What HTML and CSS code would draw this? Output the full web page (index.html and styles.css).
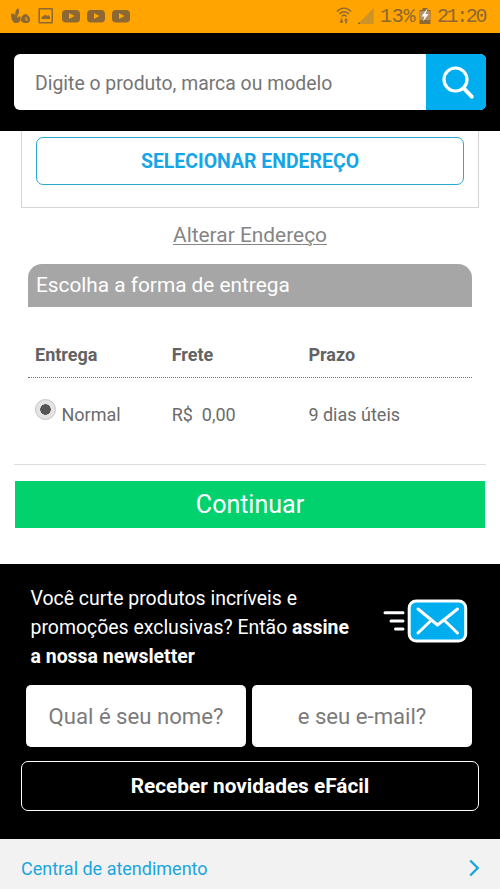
FILE: index.html
```html
<!DOCTYPE html>
<html lang="pt-BR">
<head>
<meta charset="utf-8">
<title>eFácil - Entrega</title>
<link rel="stylesheet" href="styles.css">
</head>
<body>
<div class="status">
  <svg class="status-left" width="132" height="33" viewBox="0 0 132 33" fill="#8c6834">
    <path d="M18 8c-2 2-3.500 4-2.500 7-2-1.500-3.500-2-4.500-1 0 4 1 8.500 5 9 4 0 5-3 4.500-6-1-1-2 0-3 1-.5-1.500 0-2.500 1-4 1-2 1-4-.5-6z"/>
    <path d="M21 20c0-4 3-6 5-6 2 1 4 3 4 5 .5 2-1 4-3 4-3 0-6-.5-6-3z"/>
    <path d="M26 17v3h2" fill="none" stroke="#ffa400" stroke-width="1"/>
    <rect x="39.200" y="8.700" width="13" height="14" rx=".5" fill="none" stroke="#8c6834" stroke-width="1.500"/>
    <path d="M41.500 19v-2l2-1 2-1.500 1.500 1.500 1.500-1 1.500 2v2z"/>
    <rect x="62" y="10" width="18" height="12.500" rx="4"/>
    <rect x="87" y="10" width="18" height="12.500" rx="4"/>
    <rect x="112" y="10" width="18" height="12.500" rx="4"/>
    <path d="M69 13v6l5.500-3zM94 13v6l5.500-3zM119 13v6l5.500-3z" fill="#ffa400"/>
  </svg>
  <div class="status-right">
    <svg width="42" height="33" viewBox="335 0 42 33" fill="none" stroke="#8c6834" stroke-width="1.400">
      <path d="M337 11.500c4-4.500 10-4.500 14 0M339.300 14c3-3 7-3 9.500 0M341.500 16.500c2-1.700 3.500-1.700 5 0"/>
      <path d="M341.500 18.500v4.500M346 19v4.500" stroke-width="1.600"/>
      <path d="M340 21l1.500 2 1.500-2M344.500 20.500l1.500-2 1.500 2" stroke-width="1"/>
      <path d="M373.700 8v16H358z" fill="#ce9328" stroke="none"/>
      <path d="M358 22.500h2V24h-2z" fill="#8c6834" stroke="none"/>
    </svg>
    <span class="percent">13%</span>
    <svg class="battery" width="12" height="33" viewBox="419 0 12 33">
      <path d="M422.500 8h5v2h3v14h-11V10h3z" fill="#8c6834"/>
      <path d="M420 11h10v9h-10z" fill="#b29069"/>
      <path d="M426.500 9.500l-5 7h3l-1.500 5 5.500-7.500h-3.200l2-4.500z" fill="#fff"/>
    </svg>
    <span class="clock">21:20</span>
  </div>
</div>

<header class="header">
  <div class="search">
    <span class="search-text">Digite o produto, marca ou modelo</span>
    <div class="search-button">
      <svg width="60" height="56" viewBox="0 0 60 56" fill="none" stroke="#fff">
        <circle cx="29.500" cy="25.500" r="11.500" stroke-width="3.200"/>
        <path d="M38 34.500l7.700 8.200" stroke-width="4" stroke-linecap="round"/>
      </svg>
    </div>
  </div>
</header>

<main class="main">
  <section class="address"><div class="select-address">SELECIONAR ENDEREÇO</div></section>
  <div class="change"><a>Alterar Endereço</a></div>
  <section class="delivery">
    <h2 class="delivery-title">Escolha a forma de entrega</h2>
    <div class="row head"><span>Entrega</span><span>Frete</span><span>Prazo</span></div>
    <div class="row option">
      <span class="choice"><i class="radio"></i>Normal</span><span>R$&nbsp; 0,00</span><span>9 dias úteis</span>
    </div>
  </section>
  <div class="continue">Continuar</div>
</main>

<section class="newsletter">
  <div class="pitch">
    <p>Você curte produtos incríveis e<br>promoções exclusivas? Então <b>assine</b><br><b>a nossa newsletter</b></p>
    <svg width="86" height="46" viewBox="382 598 86 46" fill="none" stroke="#fff" stroke-linecap="round" stroke-linejoin="round">
      <rect x="409.200" y="601" width="56.500" height="40" rx="7" fill="#00adee" stroke-width="3"/>
      <path d="M418 609l19.500 16L457.500 609M418 633l13-12.500M457.500 633l-13-12.500" stroke-width="3"/>
      <path d="M385 612.700h18M391 621h12M395.500 629h7.500" stroke-width="3"/>
    </svg>
  </div>
  <div class="fields">
    <div class="field">Qual é seu nome?</div>
    <div class="field">e seu e-mail?</div>
  </div>
  <div class="subscribe">Receber novidades eFácil</div>
</section>

<footer class="footer">
  <span>Central de atendimento</span>
  <svg width="12" height="18" viewBox="0 0 12 18" fill="none" stroke="#1ba5dc" stroke-width="2.400"><path d="M1.200 1.500l7.500 7.500-7.500 7.500"/></svg>
</footer>
</body>
</html>
```
FILE: styles.css
```css
* { box-sizing: border-box; }
body { margin: 0; height: 889px; overflow: hidden; background: #fff; font-family: Roboto, sans-serif; color: #6b6b6b; }
svg { display: block; flex: none; }
.status { height: 33px; background: #ffa400; display: flex; justify-content: space-between; color: #8c6834; }
.status-right { display: flex; padding-right: 13px; font: 20px/33px "Liberation Mono", monospace; }
.percent { width: 42px; padding-left: 3px; letter-spacing: -.3px; }
.clock { width: 56px; padding-left: 6px; letter-spacing: -2.400px; white-space: nowrap; }
.header { height: 98px; background: #000; padding: 21px 14px 0; }
.search { height: 56px; display: flex; background: #fff; border-radius: 6px; overflow: hidden; }
.search-text { flex: 1; padding-left: 21px; font-size: 19.400px; line-height: 59px; color: #757575; }
.search-button { width: 60px; background: #00adee; }
.main { height: 433px; }
.address { height: 77px; margin: 0 21px; padding: 6px 14px 0; border: solid #d5d5d5; border-width: 0 1px 1px; }
.select-address { height: 48px; border: 1.500px solid #2aa9d2; border-radius: 7px; text-align: center; font-size: 19.450px; font-weight: 700; line-height: 48px; color: #14a6e6; }
.change { height: 56px; text-align: center; font-size: 20.900px; line-height: 55px; color: #858585; }
.change a { text-decoration: underline; text-decoration-thickness: 1px; text-underline-offset: 2px; }
.delivery { margin: 0 14px; padding: 0 14px; height: 201px; border-bottom: 1px solid #dedede; }
.delivery-title { margin: 0; height: 43px; padding-left: 8px; border-radius: 14px 14px 0 0; background: #a6a6a6; color: #fff; font-size: 20.800px; font-weight: 400; line-height: 43px; }
.row { display: grid; grid-template-columns: 136.700px 136.700px 1fr; padding-left: 7px; font-size: 18px; }
.head { height: 71px; padding-top: 25px; border-bottom: 1px dotted #777; font-weight: 700; line-height: 46px; color: #636363; }
.option { padding-top: 14px; line-height: 46px; }
.choice { display: flex; }
.radio { width: 21px; height: 21px; margin: 7px 5.500px 0 0; border: 1px solid #c4c4c4; border-radius: 50%; background: radial-gradient(circle, #555 0 5px, #e4e4e4 5.500px); }
.continue { height: 47px; margin: 16px 15px 0; background: #02d26e; color: #fff; font-size: 25px; line-height: 47px; text-align: center; }
.newsletter { height: 275px; background: #000; color: #fff; padding: 0 21px; }
.pitch { height: 121px; padding: 20px 11px 0 9.500px; display: flex; justify-content: space-between; }
.pitch p { margin: 0; font-size: 19.450px; line-height: 29px; white-space: nowrap; }
.pitch svg { margin-top: 14px; }
.fields { display: grid; grid-template-columns: 220px 220px; gap: 6px; padding-left: 5px; }
.field { height: 62px; background: #fff; border-radius: 5px; color: #7b7b7b; font-size: 22.150px; line-height: 63px; text-align: center; }
.subscribe { height: 50px; margin-top: 14px; border: 1px solid #fff; border-radius: 7px; font-size: 20.800px; font-weight: 700; line-height: 48px; text-align: center; }
.footer { height: 50px; padding: 0 19px 0 21px; background: #f2f2f2; color: #1ba5dc; display: flex; justify-content: space-between; font-size: 18px; line-height: 59px; }
.footer svg { margin-top: 20px; }
```
